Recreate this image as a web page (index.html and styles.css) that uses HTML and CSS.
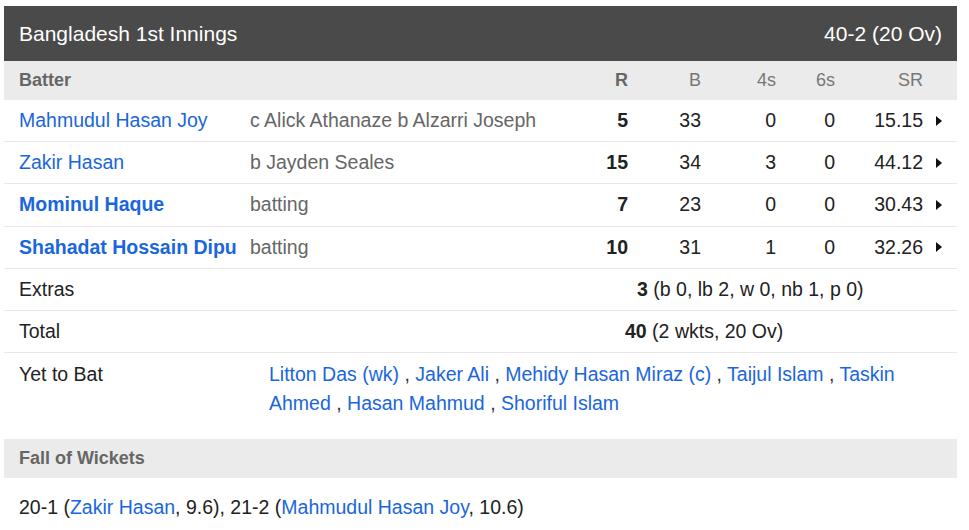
FILE: index.html
```html
<!DOCTYPE html>
<html lang="en">
<head>
<meta charset="utf-8">
<title>Bangladesh 1st Innings</title>
<link rel="stylesheet" href="styles.css">
</head>
<body>
<div class="card">
  <div class="title-bar">
    <span>Bangladesh 1st Innings</span>
    <span>40-2 (20 Ov)</span>
  </div>

  <div class="grid-row head">
    <span class="c-name strong">Batter</span>
    <span></span>
    <span class="num strong">R</span>
    <span class="num">B</span>
    <span class="num">4s</span>
    <span class="num">6s</span>
    <span class="num">SR</span>
    <span></span>
  </div>

  <div class="grid-row bat">
    <a class="c-name link">Mahmudul Hasan Joy</a>
    <span class="how">c Alick Athanaze b Alzarri Joseph</span>
    <span class="num runs">5</span>
    <span class="num">33</span>
    <span class="num">0</span>
    <span class="num">0</span>
    <span class="num">15.15</span>
    <span class="arrow-cell"><span class="arrow"></span></span>
  </div>
  <div class="grid-row bat">
    <a class="c-name link">Zakir Hasan</a>
    <span class="how">b Jayden Seales</span>
    <span class="num runs">15</span>
    <span class="num">34</span>
    <span class="num">3</span>
    <span class="num">0</span>
    <span class="num">44.12</span>
    <span class="arrow-cell"><span class="arrow"></span></span>
  </div>
  <div class="grid-row bat">
    <a class="c-name link bold">Mominul Haque</a>
    <span class="how">batting</span>
    <span class="num runs">7</span>
    <span class="num">23</span>
    <span class="num">0</span>
    <span class="num">0</span>
    <span class="num">30.43</span>
    <span class="arrow-cell"><span class="arrow"></span></span>
  </div>
  <div class="grid-row bat">
    <a class="c-name link bold">Shahadat Hossain Dipu</a>
    <span class="how">batting</span>
    <span class="num runs">10</span>
    <span class="num">31</span>
    <span class="num">1</span>
    <span class="num">0</span>
    <span class="num">32.26</span>
    <span class="arrow-cell"><span class="arrow"></span></span>
  </div>

  <div class="line-row">
    <span class="label">Extras</span>
    <span class="value extras-value"><b>3</b> (b 0, lb 2, w 0, nb 1, p 0)</span>
  </div>
  <div class="line-row">
    <span class="label">Total</span>
    <span class="value total-value"><b>40</b> (2 wkts, 20 Ov)</span>
  </div>

  <div class="ytb-row">
    <span class="ytb-label">Yet to Bat</span>
    <div class="ytb-list">
      <a class="link">Litton Das (wk)</a> , <a class="link">Jaker Ali</a> , <a class="link">Mehidy Hasan Miraz (c)</a> , <a class="link">Taijul Islam</a> , <a class="link">Taskin Ahmed</a> , <a class="link">Hasan Mahmud</a> , <a class="link">Shoriful Islam</a>
    </div>
  </div>

  <div class="section-head">Fall of Wickets</div>
  <div class="fow">20-1 (<a class="link">Zakir Hasan</a>, 9.6), 21-2 (<a class="link">Mahmudul Hasan Joy</a>, 10.6)</div>
</div>
</body>
</html>
```

FILE: styles.css
```css
* { box-sizing: border-box; }

body {
  margin: 0;
  background: #ffffff;
  font-family: "Liberation Sans", Arial, sans-serif;
  color: #222222;
}

.card {
  margin: 6px 0 0 4px;
  width: 953px;
}

.title-bar {
  height: 55px;
  padding: 0 15px;
  background: #4a4a4a;
  color: #ffffff;
  font-size: 21px;
  display: flex;
  align-items: center;
  justify-content: space-between;
}

.grid-row {
  display: grid;
  grid-template-columns: 231px 1fr 50px 73px 75px 59px 88px 19px;
  align-items: center;
  padding: 0 15px;
}

.head {
  height: 39px;
  background: #ebebeb;
  font-size: 18px;
  color: #777777;
}

.strong {
  font-weight: bold;
  color: #666666;
}

.bat {
  height: 42.2px;
  border-bottom: 1px solid #e8e8e8;
  font-size: 19.5px;
}

.c-name { white-space: nowrap; }

.link {
  color: #1a66dc;
  text-decoration: none;
}

.bold { font-weight: bold; }

.how {
  color: #666666;
  white-space: nowrap;
}

.num {
  text-align: right;
  color: #222222;
}

.head .num { color: #777777; }
.head .num.strong { color: #666666; }

.runs { font-weight: bold; }

.arrow-cell {
  display: flex;
  justify-content: flex-end;
  align-items: center;
}

.arrow {
  width: 0;
  height: 0;
  border-top: 5px solid transparent;
  border-bottom: 5px solid transparent;
  border-left: 6px solid #111111;
}

.line-row {
  height: 42.2px;
  border-bottom: 1px solid #e8e8e8;
  padding: 0 15px;
  display: flex;
  align-items: center;
  font-size: 19.5px;
  color: #222222;
}

.label { width: 200px; }

.extras-value { margin-left: 418px; }
.total-value { margin-left: 406px; }

.ytb-row {
  display: flex;
  padding: 7px 15px 21px;
  font-size: 19.5px;
  line-height: 29px;
  color: #333333;
}

.ytb-label {
  width: 250px;
  flex: none;
  color: #222222;
}

.ytb-list {
  flex: 1;
}

.section-head {
  height: 39px;
  background: #ebebeb;
  padding: 0 15px;
  display: flex;
  align-items: center;
  font-size: 18px;
  font-weight: bold;
  color: #666666;
}

.fow {
  padding: 15px 15px;
  font-size: 19.5px;
  line-height: 29px;
  color: #222222;
}
```
